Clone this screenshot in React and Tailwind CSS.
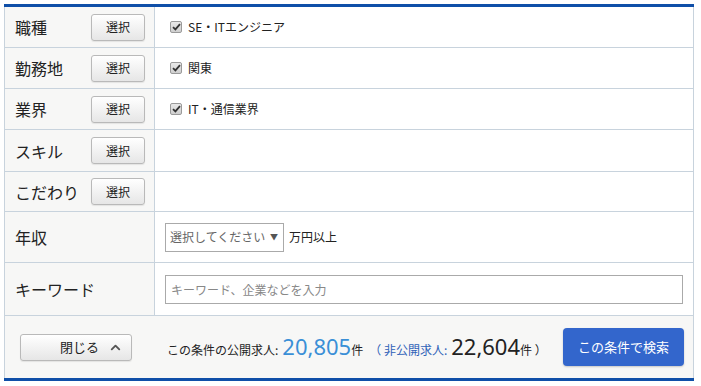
import React from "react";
import { ChevronUp } from "lucide-react";

const jp = { fontFamily: '"Noto Sans CJK JP", "Noto Sans", sans-serif' };
const num = { fontFamily: '"Noto Sans", "Open Sans", sans-serif' };

const SelectButton = () => (
  <button className="w-[54px] h-[27px] rounded-[3px] border border-[#b9b9b9] bg-gradient-to-b from-white to-[#e6e6e6] text-[12px] text-[#222] leading-none shadow-[0_1px_1px_rgba(0,0,0,0.08)]">
    選択
  </button>
);

const Check = ({ label }) => (
  <div className="flex items-center gap-[6px]">
    <span className="w-[12px] h-[12px] rounded-[2px] border border-[#9a9a9a] bg-gradient-to-b from-[#e8e8e8] to-[#cfcfcf] flex items-center justify-center">
      <svg width="9" height="8" viewBox="0 0 9 8">
        <path d="M1 4.2 L3.4 6.4 L8 1.2" fill="none" stroke="#333" strokeWidth="1.8" />
      </svg>
    </span>
    <span className="text-[12px] text-[#222]">{label}</span>
  </div>
);

const rows = [
  { label: "職種", h: "h-[41px]", value: "SE・ITエンジニア" },
  { label: "勤務地", h: "h-[41px]", value: "関東" },
  { label: "業界", h: "h-[41px]", value: "IT・通信業界" },
  { label: "スキル", h: "h-[42px]" },
  { label: "こだわり", h: "h-[40px]" },
];

export default function App() {
  return (
    <div className="w-[701px] h-[386px] bg-white pt-[4px] pl-[4px]" style={jp}>
      <div className="w-[690px] border-t-[3px] border-b-[3px] border-[#0f4fa8]">
        <div className="border-l border-r border-[#c8d3dd]">
          {rows.map((r, i) => (
            <div key={i} className={`flex ${r.h} border-b border-[#c8d3dd]`}>
              <div className="w-[150px] shrink-0 bg-[#f7f7f6] border-r border-[#c8d3dd] flex items-center justify-between pl-[10px] pr-[9px]">
                <span className="text-[16px] text-[#222]">{r.label}</span>
                <SelectButton />
              </div>
              <div className="flex-1 flex items-center pl-[15px]">
                {r.value && <Check label={r.value} />}
              </div>
            </div>
          ))}
          <div className="flex h-[51px] border-b border-[#c8d3dd]">
            <div className="w-[150px] shrink-0 bg-[#f7f7f6] border-r border-[#c8d3dd] flex items-center pl-[10px]">
              <span className="text-[16px] text-[#222]">年収</span>
            </div>
            <div className="flex-1 flex items-center pl-[10px] gap-[5px]">
              <div className="w-[119px] h-[29px] border border-[#aaa] flex items-center justify-between pl-[4px] pr-[5px] bg-white whitespace-nowrap">
                <span className="text-[12px] text-[#666]">選択してください</span>
                <span className="text-[8px] text-[#555]">▼</span>
              </div>
              <span className="text-[12px] text-[#222]">万円以上</span>
            </div>
          </div>
          <div className="flex h-[53px] border-b border-[#c8d3dd]">
            <div className="w-[150px] shrink-0 bg-[#f7f7f6] border-r border-[#c8d3dd] flex items-center pl-[10px]">
              <span className="text-[16px] text-[#222]">キーワード</span>
            </div>
            <div className="flex-1 flex items-center pl-[10px] pr-[10px]">
              <input
                className="w-full h-[29px] border border-[#aaa] px-[5px] text-[12px] placeholder:text-[#888] outline-none"
                placeholder="キーワード、企業などを入力"
                style={jp}
              />
            </div>
          </div>
          <div className="flex items-center h-[62px] bg-[#f7f7f6] pl-[15px] pr-[9px]">
            <button className="w-[112px] h-[27px] rounded-[3px] border border-[#b9b9b9] bg-gradient-to-b from-white to-[#e6e6e6] flex items-center pl-[39px] pr-[8px] shadow-[0_1px_1px_rgba(0,0,0,0.08)]">
              <span className="text-[13px] text-[#222]">閉じる</span>
              <ChevronUp size={15} strokeWidth={3} className="text-[#555] ml-auto" />
            </button>
            <div className="flex items-baseline ml-[35px] text-[#222]">
              <span className="text-[12px]">この条件の公開求人:</span>
              <span className="text-[22px] text-[#3a8fd6] ml-[4px] leading-none" style={num}>20,805</span>
              <span className="text-[12px]">件</span>
              <span className="text-[12px] text-[#2f62b8] ml-[6px]">（ 非公開求人:</span>
              <span className="text-[22px] ml-[4px] leading-none" style={num}>22,604</span>
              <span className="text-[12px]">件 ）</span>
            </div>
            <button className="ml-auto w-[121px] h-[38px] rounded-[4px] bg-[#3366cc] text-white text-[13px] shadow-[0_1px_2px_rgba(0,0,0,0.2)]">
              この条件で検索
            </button>
          </div>
        </div>
      </div>
    </div>
  );
}
